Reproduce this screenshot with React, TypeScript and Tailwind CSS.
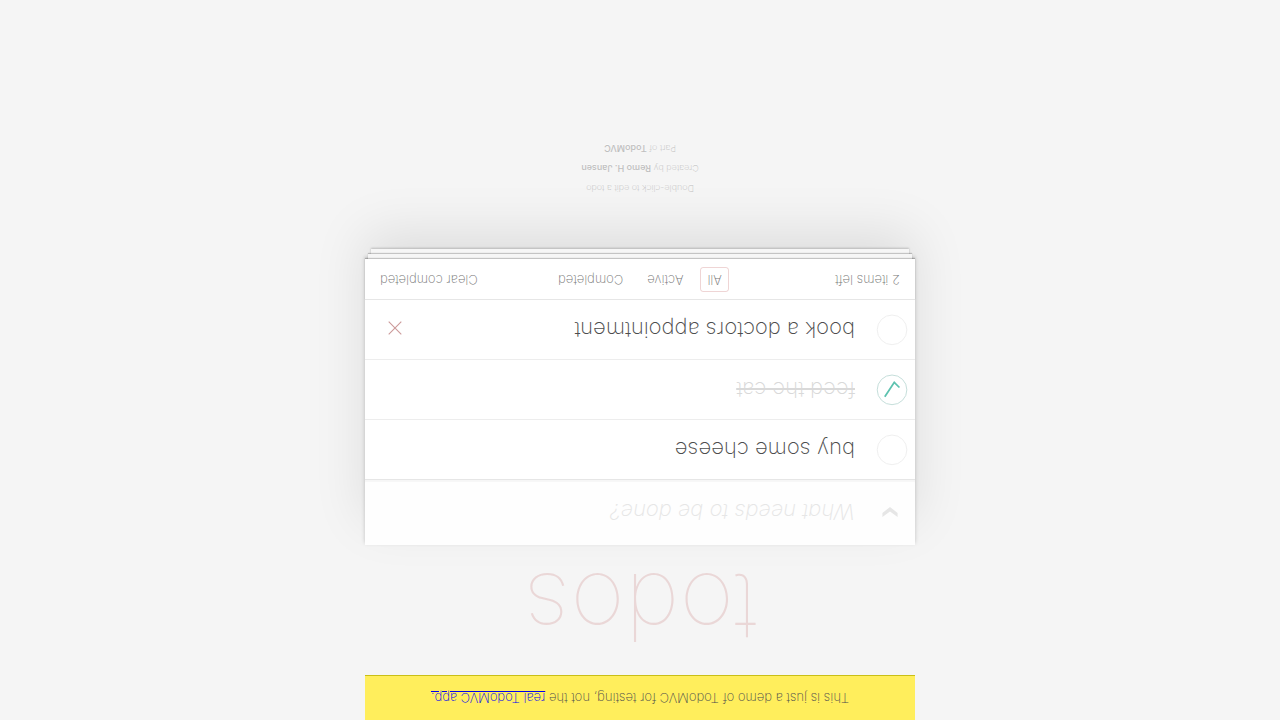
import { useState } from "react";

type Todo = { id: number; title: string; done: boolean };
type Filter = "All" | "Active" | "Completed";

const initialTodos: Todo[] = [
  { id: 1, title: "buy some cheese", done: false },
  { id: 2, title: "feed the cat", done: true },
  { id: 3, title: "book a doctors appointment", done: false },
];

const filters: Filter[] = ["All", "Active", "Completed"];

function ToggleMark({ done }: { done: boolean }) {
  return (
    <svg viewBox="-10 -18 100 135" className="pointer-events-none absolute inset-0 size-10 overflow-visible" aria-hidden="true">
      <circle cx="50" cy="50" r="50" fill="none" stroke={done ? "#bddad5" : "#ededed"} strokeWidth="3" />
      {done && <path fill="#5dc2af" d="M72 25L42 71 27 56l-4 4 20 20 34-52z" />}
    </svg>
  );
}

function TodoItem({ todo, showRemove, onToggle, onRemove }: { todo: Todo; showRemove: boolean; onToggle: () => void; onRemove: () => void }) {
  return (
    <li className="group flex h-15 items-center border-b border-[#ededed] pb-px last:h-[59px] last:border-b-0">
      <span className="relative size-10 shrink-0">
        <input id={`todo-${todo.id}`} type="checkbox" checked={todo.done} onChange={onToggle} className="size-10 appearance-none" />
        <ToggleMark done={todo.done} />
      </span>
      <label
        htmlFor={`todo-${todo.id}`}
        className={`ml-5 flex-1 text-[22px] leading-7 font-extralight ${todo.done ? "text-[#d9d9d9] line-through decoration-2" : "text-[#4d4d4d]"}`}
      >
        {todo.title}
      </label>
      <button
        type="button"
        aria-label={`Remove ${todo.title}`}
        onClick={onRemove}
        className={`mr-2.5 flex size-10 items-center justify-center pt-1 group-hover:opacity-100 ${showRemove ? "opacity-100" : "opacity-0"}`}
      >
        <svg viewBox="0 0 14 14" className="size-3.5" fill="none" stroke="#cc9a9a" strokeWidth="1.1" aria-hidden="true">
          <path d="M0.7 0.7L13.3 13.3M13.3 0.7L0.7 13.3" />
        </svg>
      </button>
    </li>
  );
}

export default function App() {
  const [todos, setTodos] = useState(initialTodos);
  const [filter, setFilter] = useState<Filter>("All");
  const [draft, setDraft] = useState("");

  const left = todos.filter((t) => !t.done).length;
  const shown = todos.filter((t) => filter === "All" || t.done === (filter === "Completed"));
  const toggle = (id: number) => setTodos(todos.map((t) => (t.id === id ? { ...t, done: !t.done } : t)));
  const addTodo = (e: React.FormEvent) => {
    e.preventDefault();
    if (!draft.trim()) return;
    setTodos([...todos, { id: Date.now(), title: draft.trim(), done: false }]);
    setDraft("");
  };

  return (
    <div className="min-h-screen rotate-180 bg-[#f5f5f5] font-['Inter','Liberation_Sans',sans-serif] text-sm text-[#4d4d4d]">
      <div className="mx-auto max-w-[550px]">
        <p className="flex h-[45px] items-center justify-center border-b border-[#c9bf17] bg-[#ffee5c] text-[13px] font-extralight">
          <span>
            This is just a demo of TodoMVC for testing, not the{" "}
            <a href="#real" className="text-[#0000ee] underline">
              real TodoMVC app.
            </a>
          </span>
        </p>

        <h1 className="flex h-[130px] items-center justify-center pt-1 text-[94px] leading-none font-thin text-[#af2f2f]/15">todos</h1>

        <section className="relative bg-white shadow-[0_2px_4px_0_rgba(0,0,0,0.2),0_25px_50px_0_rgba(0,0,0,0.1)]">
          <form onSubmit={addTodo} className="flex h-[65px] items-center bg-[#fefefe] shadow-[inset_0_-2px_1px_rgba(0,0,0,0.03)]">
            <button
              type="button"
              aria-label="Mark all as complete"
              onClick={() => setTodos(todos.map((t) => ({ ...t, done: left > 0 })))}
              className="flex w-[50px] shrink-0 items-center justify-center"
            >
              <svg viewBox="0 0 16 10" className="h-2.5 w-4" fill="#e6e6e6" aria-hidden="true">
                <path d="M0.4 0L8 5.6L15.6 0V4L8 10L0.4 4Z" />
              </svg>
            </button>
            <input
              type="text"
              aria-label="New todo"
              placeholder="What needs to be done?"
              value={draft}
              onChange={(e) => setDraft(e.target.value)}
              className="ml-2.5 min-w-0 flex-1 bg-transparent text-[22px] leading-7 font-extralight outline-none placeholder:text-[#e6e6e6] placeholder:italic"
            />
          </form>

          <ul className="border-t border-[#e6e6e6]">
            {shown.map((todo) => (
              <TodoItem
                key={todo.id}
                todo={todo}
                showRemove={todo.id === 3}
                onToggle={() => toggle(todo.id)}
                onRemove={() => setTodos(todos.filter((t) => t.id !== todo.id))}
              />
            ))}
          </ul>

          <footer className="grid h-[41px] grid-cols-[1fr_auto_1fr] items-center border-t border-[#e6e6e6] bg-white px-[15px] pb-px text-[13px] font-extralight text-[#777777] shadow-[0_1px_1px_rgba(0,0,0,0.2),0_8px_0_-3px_#f6f6f6,0_9px_1px_-3px_rgba(0,0,0,0.2),0_16px_0_-6px_#f6f6f6,0_17px_2px_-6px_rgba(0,0,0,0.2)]">
            <span>{left} items left</span>
            <div className="flex gap-2.5">
              {filters.map((name) => (
                <button
                  key={name}
                  type="button"
                  aria-pressed={filter === name}
                  onClick={() => setFilter(name)}
                  className={`h-[25px] rounded-[3px] border px-1.5 ${filter === name ? "border-[#af2f2f]/20" : "border-transparent"}`}
                >
                  {name}
                </button>
              ))}
            </div>
            <button type="button" onClick={() => setTodos(todos.filter((t) => !t.done))} className="justify-self-end">
              Clear completed
            </button>
          </footer>
        </section>

        <footer className="mt-[61px] text-center text-[9px] leading-5 font-extralight text-[#bfbfbf] text-shadow-[0_1px_0_rgba(255,255,255,0.5)]">
          <p>Double-click to edit a todo</p>
          <p>
            Created by <a href="#author" className="font-medium">Remo H. Jansen</a>
          </p>
          <p>
            Part of <a href="#todomvc" className="font-medium">TodoMVC</a>
          </p>
        </footer>
      </div>
    </div>
  );
}
